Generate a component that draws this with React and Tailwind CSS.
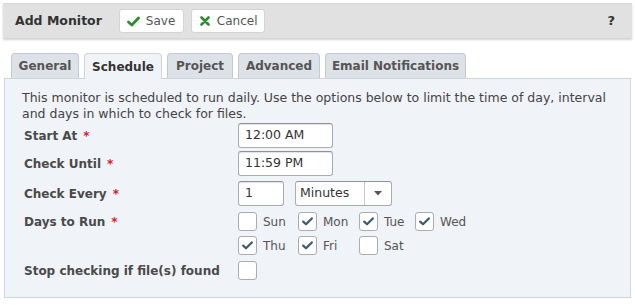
import React from "react";

const font = { fontFamily: '"DejaVu Sans", Verdana, sans-serif' };

function Check({ checked }) {
  return (
    <span className="w-[19px] h-[19px] rounded-[3px] border border-[#a9adb1] bg-white flex items-center justify-center shrink-0">
      {checked && (
        <svg width="11" height="9" viewBox="0 0 11 9">
          <path d="M1.2 4.6 L4 7.3 L9.8 1.4" fill="none" stroke="#3f5a73" strokeWidth="2.2" strokeLinecap="round" strokeLinejoin="round" />
        </svg>
      )}
    </span>
  );
}

function Day({ label, checked, w }) {
  return (
    <div className={`flex items-center gap-[6px] ${w}`}>
      <Check checked={checked} />
      <span className="text-[12px] text-[#555]">{label}</span>
    </div>
  );
}

function Label({ children, req }) {
  return (
    <div className="w-[214px] shrink-0 text-[12px] font-bold text-[#4a4a4a]">
      {children}
      {req && <span className="text-[#d4202a] ml-[6px]">*</span>}
    </div>
  );
}

function Input({ value, w }) {
  return (
    <div className={`${w} h-[25px] border border-[#a9adb1] border-t-[#8e9296] rounded-[3px] bg-white flex items-center px-[6px] text-[12.5px] text-[#333] shadow-[inset_0_1px_1px_rgba(0,0,0,0.12)]`}>
      {value}
    </div>
  );
}

export default function App() {
  const tabs = [
    ["General", "w-[68px]"],
    ["Schedule", "w-[78px]"],
    ["Project", "w-[66px]"],
    ["Advanced", "w-[82px]"],
    ["Email Notifications", "w-[141px]"],
  ];
  return (
    <div className="w-[635px] h-[305px] bg-white relative" style={font}>
      <div className="mx-[3px] mt-[3px] h-[35px] bg-[#e1e1e1] border-t border-[#d5d5d5] shadow-[0_2px_2px_rgba(0,0,0,0.18)] flex items-center pl-[12px] pr-[17px]">
        <span className="text-[12.5px] font-bold text-[#333]">Add Monitor</span>
        <div className="ml-[17px] h-[24px] w-[65px] bg-white border border-[#d4d4d4] rounded-[3px] flex items-center pl-[7px] gap-[6px]">
          <svg width="13" height="11" viewBox="0 0 13 11">
            <path d="M1.5 6 L4.8 9 L11.5 2" fill="none" stroke="#2e8b2e" strokeWidth="2.8" strokeLinecap="round" strokeLinejoin="round" />
          </svg>
          <span className="text-[12px] text-[#555]">Save</span>
        </div>
        <div className="ml-[7px] h-[24px] w-[74px] bg-white border border-[#d4d4d4] rounded-[3px] flex items-center pl-[8px] gap-[7px]">
          <svg width="10" height="10" viewBox="0 0 10 10">
            <path d="M1.5 1.5 L8.5 8.5 M8.5 1.5 L1.5 8.5" fill="none" stroke="#2e8b2e" strokeWidth="2.6" strokeLinecap="round" />
          </svg>
          <span className="text-[12px] text-[#555]">Cancel</span>
        </div>
        <span className="ml-auto text-[13px] font-bold text-[#333]">?</span>
      </div>

      <div className="mx-[4px] mt-[15px]">
        <div className="flex gap-[5px] pl-[7px] relative z-10">
          {tabs.map(([t, w]) => {
            const active = t === "Schedule";
            return (
              <div
                key={t}
                className={`${w} h-[25px] rounded-t-[4px] border border-b-0 flex items-center justify-center text-[12px] font-bold ${
                  active
                    ? "bg-[#f0f3f7] border-[#cfd4d9] text-[#333] mb-[-1px] h-[26px]"
                    : "bg-[#dde2e8] border-[#c3c9cf] text-[#555]"
                }`}
              >
                {t}
              </div>
            );
          })}
        </div>
        <div className="h-[220px] bg-[#f0f3f7] border border-[#cfd4d9] pl-[17px] pt-[11px]">
          <p className="text-[12.5px] leading-[16px] text-[#444] pr-[12px]">
            This monitor is scheduled to run daily. Use the options below to limit the time of day, interval and days in which to check for files.
          </p>
          <div className="pl-[2px] mt-[1px] flex flex-col">
            <div className="flex items-center h-[25px]">
              <Label req>Start At</Label>
              <Input value="12:00 AM" w="w-[95px]" />
            </div>
            <div className="flex items-center h-[25px] mt-[3px]">
              <Label req>Check Until</Label>
              <Input value="11:59 PM" w="w-[95px]" />
            </div>
            <div className="flex items-center h-[25px] mt-[5px]">
              <Label req>Check Every</Label>
              <Input value="1" w="w-[46px]" />
              <div className="ml-[11px] w-[97px] h-[25px] border border-[#a9adb1] border-t-[#8e9296] rounded-[3px] bg-white flex text-[12.5px] text-[#333]">
                <div className="flex-1 flex items-center pl-[4px] border-r border-[#c6c9cc]">Minutes</div>
                <div className="w-[26px] flex items-center justify-center">
                  <svg width="8" height="5" viewBox="0 0 8 5">
                    <path d="M0 0 L8 0 L4 4.5 Z" fill="#555" />
                  </svg>
                </div>
              </div>
            </div>
            <div className="flex items-start mt-[6px]">
              <div className="h-[20px] flex items-center">
                <Label req>Days to Run</Label>
              </div>
              <div className="flex flex-col gap-[5px]">
                <div className="flex">
                  <Day label="Sun" w="w-[60px]" />
                  <Day label="Mon" checked w="w-[61px]" />
                  <Day label="Tue" checked w="w-[56px]" />
                  <Day label="Wed" checked w="w-[60px]" />
                </div>
                <div className="flex">
                  <Day label="Thu" checked w="w-[60px]" />
                  <Day label="Fri" checked w="w-[61px]" />
                  <Day label="Sat" w="w-[56px]" />
                </div>
              </div>
            </div>
            <div className="flex items-center mt-[6px]">
              <Label>Stop checking if file(s) found</Label>
              <Check />
            </div>
          </div>
        </div>
      </div>
    </div>
  );
}
